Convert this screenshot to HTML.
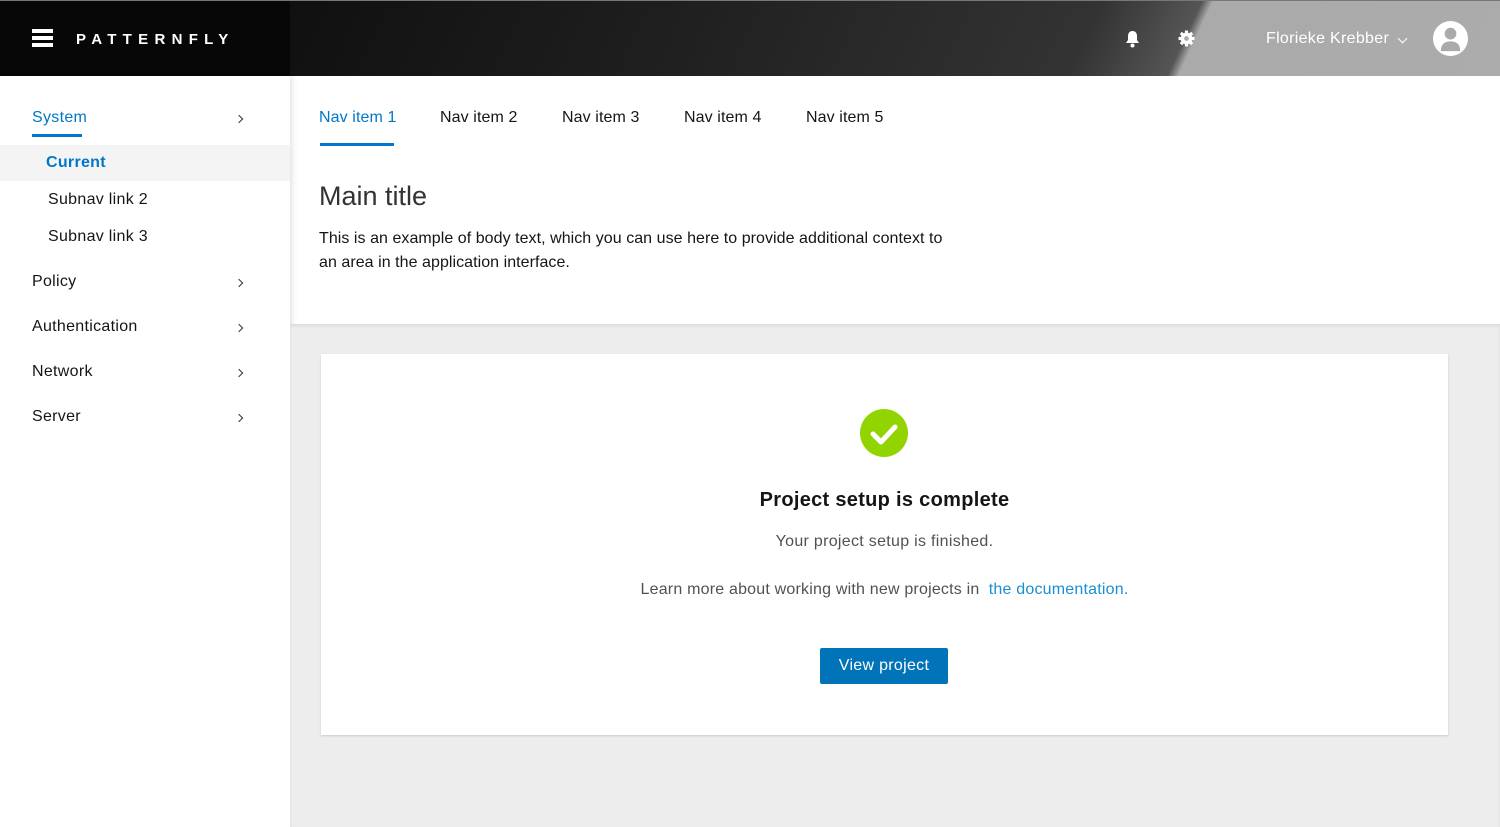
<!DOCTYPE html>
<html><head><meta charset="utf-8"><style>
*{box-sizing:border-box;margin:0;padding:0}
body{width:1500px;height:827px;overflow:hidden;font-family:"Liberation Sans",sans-serif;background:#fff;position:relative;color:#151515}
.hdr{position:absolute;left:0;top:0;width:1500px;height:76px;background:linear-gradient(115deg,#0a0a0a 0,#111 290px,#1e1e1e 600px,#333 1000px,#555 1090px,#aaa 1100px,#acacac 1500px);overflow:hidden}
.hdr .blk{position:absolute;left:0;top:0;width:290px;height:76px;background:#070707}
.hdr .top{position:absolute;left:0;top:0;width:1500px;height:1px;background:#777}
.abs{position:absolute;white-space:nowrap}
.side{position:absolute;left:0;top:76px;width:290px;height:751px;background:#fff;box-shadow:2px 0 6px rgba(0,0,0,.12)}
.si{font-size:16px;color:#151515;letter-spacing:.3px}
.chev{position:absolute;width:6px;height:6px;border-right:1.5px solid #333;border-top:1.5px solid #333;transform:rotate(45deg)}
.tab{font-size:16px;color:#151515;top:109px;letter-spacing:.1px}
</style></head><body>
<div class="hdr"><div class="blk"></div><div class="top"></div>
<div class="abs" style="left:32px;top:29px;width:21px;height:4px;background:#fff"></div>
<div class="abs" style="left:32px;top:36px;width:21px;height:4px;background:#fff"></div>
<div class="abs" style="left:32px;top:43px;width:21px;height:4px;background:#fff"></div>
<div class="abs" style="left:76px;top:31px;color:#fff;font-size:15px;font-weight:bold;letter-spacing:6.3px">PATTERNFLY</div>
<svg class="abs" style="left:1124px;top:30px" width="17" height="18" viewBox="0 0 17 18"><path d="M8.5 1c-3 0-4.5 2.3-4.5 5v4l-2 3h13l-2-3V6c0-2.7-1.5-5-4.5-5z" fill="#fff"/><circle cx="8.5" cy="15.5" r="2" fill="#fff"/></svg>
<svg class="abs" style="left:1178px;top:30px" width="17" height="17" viewBox="0 0 16 16"><g fill="#fff"><circle cx="8" cy="8" r="5.5"/><rect x="6.5" y="0.5" width="3" height="15"/><rect x="0.5" y="6.5" width="15" height="3"/><rect x="6.5" y="0.5" width="3" height="15" transform="rotate(45 8 8)"/><rect x="6.5" y="0.5" width="3" height="15" transform="rotate(-45 8 8)"/></g><circle cx="8" cy="8" r="2.2" fill="#aaa"/></svg>
<div class="abs" style="left:1266px;top:30px;color:#fff;font-size:16px;letter-spacing:.3px">Florieke Krebber</div>
<div class="abs" style="left:1399px;top:35px;width:7px;height:7px;border-right:1.5px solid #fff;border-bottom:1.5px solid #fff;transform:rotate(45deg)"></div>
<svg class="abs" style="left:1433px;top:21px" width="35" height="35" viewBox="0 0 36 36"><circle cx="18" cy="18" r="18" fill="#fff"/><circle cx="18" cy="13" r="6" fill="#aaa"/><path d="M8 31c0-7 4-10 10-10s10 3 10 10z" fill="#aaa"/></svg>
</div>
<div class="side">
<div class="abs si" style="left:32px;top:33px;color:#0077c8">System</div>
<div class="abs" style="left:32px;top:58px;width:50px;height:3px;background:#0077c8"></div>
<div class="chev" style="left:236px;top:40px"></div>
<div class="abs" style="left:0;top:69px;width:290px;height:36px;background:#f4f4f4"></div>
<div class="abs si" style="left:46px;top:78px;color:#0077c8;font-weight:bold">Current</div>
<div class="abs si" style="left:48px;top:115px">Subnav link 2</div>
<div class="abs si" style="left:48px;top:152px">Subnav link 3</div>
<div class="abs si" style="left:32px;top:197px">Policy</div><div class="chev" style="left:236px;top:204px"></div>
<div class="abs si" style="left:32px;top:242px">Authentication</div><div class="chev" style="left:236px;top:249px"></div>
<div class="abs si" style="left:32px;top:287px">Network</div><div class="chev" style="left:236px;top:294px"></div>
<div class="abs si" style="left:32px;top:332px">Server</div><div class="chev" style="left:236px;top:339px"></div>
</div>
<div class="abs tab" style="left:319px;color:#0077c8">Nav item 1</div>
<div class="abs" style="left:320px;top:143px;width:74px;height:3px;background:#0077c8"></div>
<div class="abs tab" style="left:440px">Nav item 2</div>
<div class="abs tab" style="left:562px">Nav item 3</div>
<div class="abs tab" style="left:684px">Nav item 4</div>
<div class="abs tab" style="left:806px">Nav item 5</div>
<div class="abs" style="left:319px;top:181px;font-size:27px;color:#333">Main title</div>
<div class="abs" style="left:319px;top:227px;font-size:16px;line-height:24px;letter-spacing:.05px">This is an example of body text, which you can use here to provide additional context to<br>an area in the application interface.</div>
<div class="abs" style="left:290px;top:324px;width:1210px;height:503px;background:#ededed;box-shadow:inset 0 2px 3px rgba(0,0,0,.08)"></div>
<div class="abs" style="left:321px;top:354px;width:1127px;height:381px;background:#fff;box-shadow:0 1px 2px rgba(0,0,0,.15)"></div>
<svg class="abs" style="left:860px;top:409px" width="48" height="48" viewBox="0 0 48 48"><circle cx="24" cy="24" r="24" fill="#92d400"/><path d="M13 25l8 8 14-15" stroke="#fff" stroke-width="5" fill="none" stroke-linecap="round" stroke-linejoin="round"/></svg>
<div class="abs" style="left:321px;width:1127px;text-align:center;top:489px;font-size:20px;font-weight:bold;color:#151515;letter-spacing:.3px">Project setup is complete</div>
<div class="abs" style="left:321px;width:1127px;text-align:center;top:533px;font-size:16px;color:#4f5255;letter-spacing:.3px">Your project setup is finished.</div>
<div class="abs" style="left:321px;width:1127px;text-align:center;top:581px;font-size:16px;color:#4f5255;letter-spacing:.2px">Learn more about working with new projects in &nbsp;<span style="color:#1a8fd0">the documentation.</span></div>
<div class="abs" style="left:820px;top:648px;width:128px;height:36px;background:#0073b9;border-radius:2px;color:#fff;font-size:16px;text-align:center;line-height:36px;letter-spacing:.3px">View project</div>
</body></html>
